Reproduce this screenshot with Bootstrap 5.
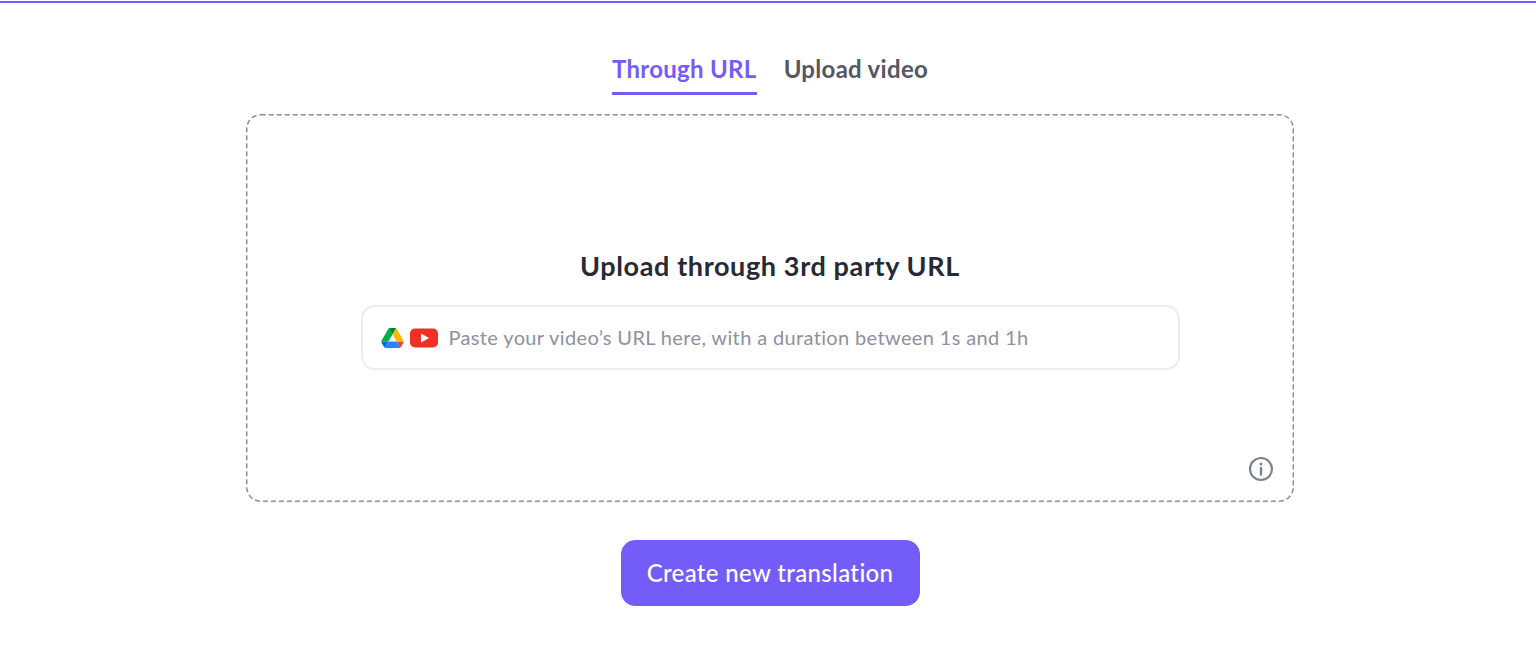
<!DOCTYPE html>
<html>

<head>
  <meta charset="utf-8">
  <meta name="viewport" content="width=device-width">
  <title>New translation</title>
  <link href="https://cdn.jsdelivr.net/npm/bootstrap@5.3.3/dist/css/bootstrap.min.css" rel="stylesheet" />
  <style>
    html, body { height: 100%; overflow: hidden; }
    body { font-family: "Lato", "Noto Sans", sans-serif; background: #fff; }
    .top-line { height: 2px; background: #745cf9; margin-top: 1px; }
    .page-wrap { padding-left: 4px; }
    .tab-row { gap: 27px; padding-top: 50px; height: 92px; }
    .tab-link { font-size: 24px; font-weight: 700; line-height: 32px; height: 42px; padding: 0; color: #535766; border-bottom: 3px solid transparent; letter-spacing: .3px; }
    .tab-link:hover { color: #535766; }
    .tab-link.active { color: #745cf9; border-bottom-color: #745cf9; }
    .drop-box { width: 1048px; height: 388px; margin-top: 19px; padding-top: 134px; }
    .drop-border { position: absolute; inset: 0; width: 100%; height: 100%; pointer-events: none; }
    .drop-title { font-size: 27px; font-weight: 700; line-height: 36px; color: #262a36; margin: 0 0 21px; letter-spacing: .62px; }
    .url-group { width: 819px; height: 65px; border: 2px solid #ebecef; border-radius: 14px; padding: 0 18px; gap: 6px; }
    .url-input { border: 0; outline: 0; padding: 0; margin-left: 5px; font-size: 20px; line-height: 28px; color: #8d91a0; letter-spacing: .36px; box-shadow: none; position: relative; top: -1px; }
    .url-input::placeholder { color: #8d91a0; opacity: 1; }
    .url-input:focus { box-shadow: none; }
    .info-icon { position: absolute; right: 20px; bottom: 20px; }
    .create-btn { width: 299px; height: 66px; margin-top: 38px; border-radius: 14px; background: #745cf9; border-color: #745cf9; color: #fff; font-size: 24px; font-weight: 500; letter-spacing: .35px; }
    .create-btn:hover { background: #745cf9; border-color: #745cf9; }
  </style>
</head>

<body>

  <div class="top-line"></div>

  <div class="page-wrap d-flex flex-column align-items-center">
    <ul class="nav justify-content-center tab-row">
      <li class="nav-item"><a class="nav-link tab-link active" href="#">Through URL</a></li>
      <li class="nav-item"><a class="nav-link tab-link" href="#">Upload video</a></li>
    </ul>

    <div class="drop-box position-relative d-flex flex-column align-items-center">
      <svg class="drop-border" viewBox="0 0 1048 388" fill="none">
        <rect x="0.75" y="0.75" width="1046.5" height="386.5" rx="14" stroke="#8a8e9c" stroke-width="1.5" stroke-dasharray="5 3"/>
      </svg>

      <h2 class="drop-title text-center">Upload through 3rd party URL</h2>

      <div class="url-group d-flex align-items-center">
        <svg width="23" height="20" viewBox="0 0 87.3 78" class="flex-shrink-0">
          <path d="m6.6 66.85 3.85 6.65c.8 1.4 1.95 2.5 3.3 3.3l13.75-23.8h-27.5c0 1.55.4 3.1 1.2 4.5z" fill="#0066da" />
          <path d="m43.65 25-13.75-23.8c-1.35.8-2.5 1.9-3.3 3.3l-25.4 44a9.06 9.06 0 0 0 -1.2 4.5h27.5z" fill="#00ac47" />
          <path d="m73.55 76.8c1.35-.8 2.5-1.9 3.3-3.3l1.6-2.75 7.65-13.25c.8-1.4 1.2-2.95 1.2-4.5h-27.502l5.852 11.5z" fill="#ea4335" />
          <path d="m43.65 25 13.75-23.8c-1.35-.8-2.9-1.2-4.5-1.2h-18.5c-1.6 0-3.15.45-4.5 1.2z" fill="#00832d" />
          <path d="m59.8 53h-32.3l-13.75 23.8c1.35.8 2.9 1.2 4.5 1.2h50.8c1.6 0 3.15-.45 4.5-1.2z" fill="#2684fc" />
          <path d="m73.4 26.5-12.7-22c-.8-1.4-1.95-2.5-3.3-3.3l-13.75 23.8 16.15 28h27.45c0-1.55-.4-3.1-1.2-4.5z" fill="#ffba00" />
        </svg>
        <svg width="28" height="20" viewBox="0 0 28 20" class="flex-shrink-0">
          <rect width="28" height="19" y="0.500" rx="5" fill="#ee3124" />
          <path d="M11 5.500v9l8-4.500z" fill="#fff" />
        </svg>
        <input class="form-control url-input" type="text" placeholder="Paste your video’s URL here, with a duration between 1s and 1h">
      </div>

      <svg class="info-icon" width="26" height="26" viewBox="0 0 26 26" fill="none" stroke="#7d8293" stroke-width="2.2">
        <circle cx="13" cy="13" r="11" />
        <path d="M13 12v6.500" stroke-linecap="round" stroke-width="2.400" />
        <circle cx="13" cy="8" r="1.500" fill="#7d8293" stroke="none" />
      </svg>
    </div>

    <button class="btn create-btn" type="button">Create new translation</button>
  </div>

  <script src="https://cdn.jsdelivr.net/npm/bootstrap@5.3.3/dist/js/bootstrap.bundle.min.js"></script>
</body>

</html>
